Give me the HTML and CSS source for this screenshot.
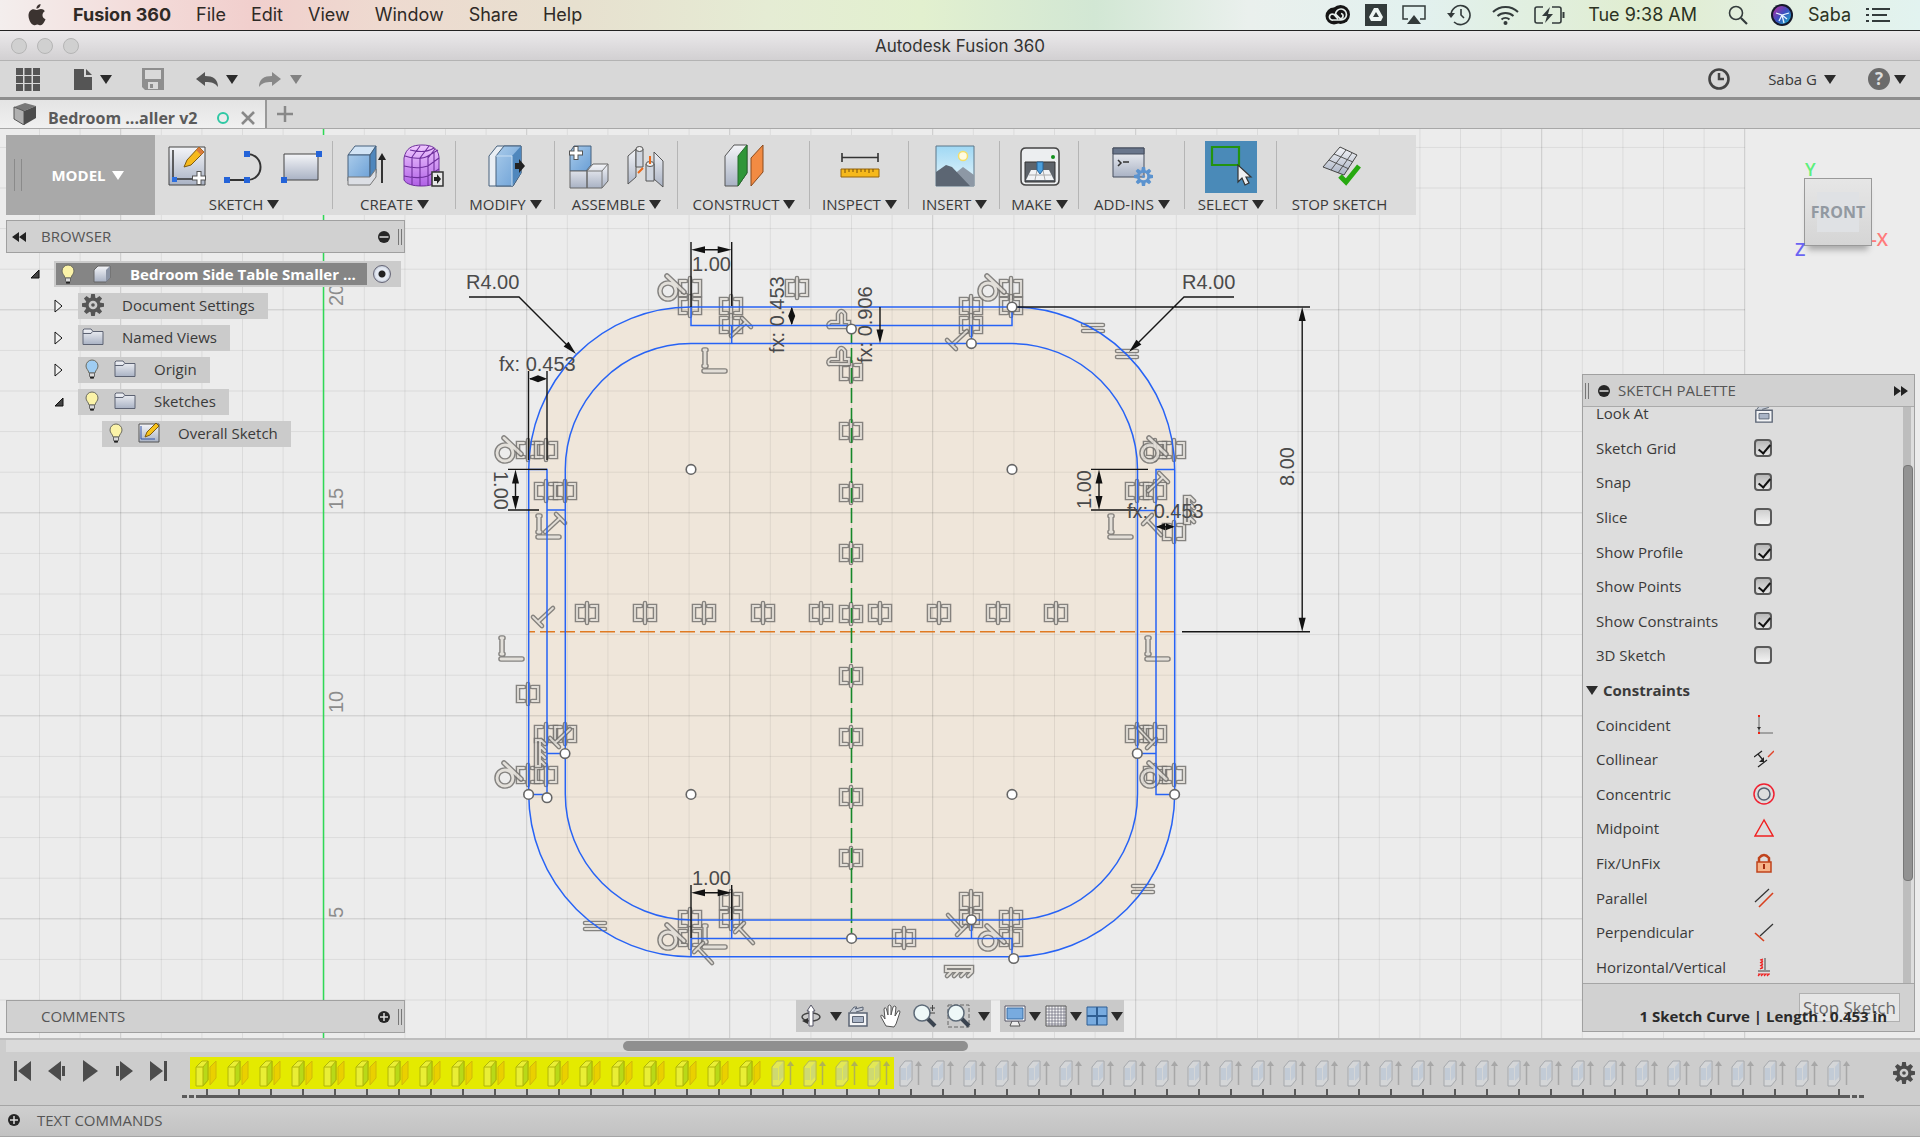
FILE: index.html
```html
<!DOCTYPE html>
<html lang="en">
<head>
<meta charset="utf-8">
<title>Autodesk Fusion 360</title>
<link rel="stylesheet" href="styles.css">
</head>
<body>
<svg class="defs" aria-hidden="true">
  <defs>
    <linearGradient id="gBlue" x1="0" y1="0" x2="1" y2="1"><stop offset="0" stop-color="#a9cbea"/><stop offset="1" stop-color="#6a9fd6"/></linearGradient>
    <linearGradient id="gGrey" x1="0" y1="0" x2="0" y2="1"><stop offset="0" stop-color="#f4f5f8"/><stop offset="1" stop-color="#a9b2c4"/></linearGradient>
    <linearGradient id="gSky" x1="0" y1="0" x2="0" y2="1"><stop offset="0" stop-color="#9fd8f4"/><stop offset="1" stop-color="#e8f6fb"/></linearGradient>
    <linearGradient id="gPurple" x1="0" y1="0" x2="0" y2="1"><stop offset="0" stop-color="#f0c8ff"/><stop offset="1" stop-color="#b061e6"/></linearGradient>
    <linearGradient id="gSiri" x1="0" y1="0" x2="1" y2="1"><stop offset="0" stop-color="#c02ba0"/><stop offset=".5" stop-color="#3b4fc0"/><stop offset="1" stop-color="#19b7c9"/></linearGradient>
    <symbol id="bulb" viewBox="0 0 14 20"><path d="M7 1a6 6 0 0 1 6 6c0 3-2.500 4-3 7H4C3.500 11 1 10 1 7a6 6 0 0 1 6-6z" stroke="#6b6b60"/><path d="M4.500 14h5v3.500L8 19H6l-1.500-1.500z" fill="#dadada" stroke="#666"/><path d="M5 18.500h4" stroke="#222" stroke-width="2"/></symbol>
    <symbol id="folder" viewBox="0 0 22 18"><path d="M1 16.500V2l1-1h7l2 2.500h10v13z" fill="url(#gGrey)" stroke="#5c6272"/><path d="M1 5.500h8l1.500-2" fill="none" stroke="#5c6272"/></symbol>
    <symbol id="gear" viewBox="0 0 24 24"><g fill="currentColor"><path id="tooth" d="M10 0h4l.7 5H9.300z"/><use href="#tooth" transform="rotate(45 12 12)"/><use href="#tooth" transform="rotate(90 12 12)"/><use href="#tooth" transform="rotate(135 12 12)"/><use href="#tooth" transform="rotate(180 12 12)"/><use href="#tooth" transform="rotate(225 12 12)"/><use href="#tooth" transform="rotate(270 12 12)"/><use href="#tooth" transform="rotate(315 12 12)"/></g><circle cx="12" cy="12" r="6.500" fill="none" stroke="currentColor" stroke-width="3.500"/><circle cx="12" cy="12" r="2" fill="currentColor"/></symbol>
    <symbol id="plane" viewBox="0 0 24 28"><path d="M2 8l6-6h6v19l-5 6H2z" fill="#fff" fill-opacity=".35" stroke="#8f9410"/><path d="M9 8l5-6v19l-5 6z" fill="#7fc21a" fill-opacity=".75" stroke="#8f9410"/><path d="M2 8h7" stroke="#8f9410"/><path d="M16 8l6-6v17l-6 7z" fill="#f0b400" fill-opacity=".8" stroke="#c49a10"/></symbol>
    <symbol id="extrude" viewBox="0 0 24 28"><path d="M2 8l5-6h7v19l-5 6H2z" fill="#e2e6ec" fill-opacity=".6" stroke="#8d9298"/><path d="M3 9h5v12H3zM9 8l4-5v15l-4 4z" fill="#a9bedb" fill-opacity=".6"/><path d="M20.500 26V5" stroke="#8e8e8e" stroke-width="1.500"/><path d="M17 7l3.500-5L24 7z" fill="#8e8e8e"/></symbol>
    <symbol id="minus" viewBox="0 0 12 12"><circle cx="6" cy="6" r="6" fill="#262626"/><path d="M1.500 6h9" stroke="#ddd" stroke-width="1.500"/></symbol>
    <symbol id="plus" viewBox="0 0 12 12"><circle cx="6" cy="6" r="6" fill="#262626"/><path d="M2 6h8M6 2v8" stroke="#ddd" stroke-width="1.500"/></symbol>
    <symbol id="camera" viewBox="0 0 22 22"><path d="M2 8h18v13H2z" fill="#f3f4f6" stroke="#5b6474" stroke-width="1.500"/><path d="M5.500 11.500h11v6h-11z" fill="#a9b4c6" stroke="#5b6474"/><path d="M3 7l4-5h3l-2 2 8-2v3l-7 2" fill="#c9cfd8" stroke="#5b6474"/></symbol>
    <symbol id="lens" viewBox="0 0 24 24"><path d="M14 14l8 8" stroke="#3b4450" stroke-width="4"/><circle cx="9" cy="9" r="8" fill="#eef8f8" stroke="#5d6a78" stroke-width="1.500"/></symbol>
  </defs>
</svg>

<header class="menubar">
  <nav class="menus">
    <svg class="apple" width="18" height="22" viewBox="0 0 18 22"><path d="M12.500 0c.2 2.500-1.800 4.800-4 4.700C8.300 2.400 10.300.2 12.500 0zM9 6c1 0 2-1 4-1 1.600 0 3 .9 3.800 2.200-3.400 2-2.900 6.600.7 8-1 2.700-2.900 6-5 6-1.200 0-1.700-.8-3.200-.8s-2 .8-3.200.8C3.400 21.200.5 16 .5 11.600.5 7.500 3 5.200 5.500 5.200 7 5.200 8.100 6 9 6z" fill="#3b3330"/></svg>
    <button class="app">Fusion 360</button><button>File</button><button>Edit</button><button>View</button><button>Window</button><button>Share</button><button>Help</button>
  </nav>
  <div class="status">
    <svg width="26" height="20" viewBox="0 0 26 20" fill="none"><circle cx="10" cy="11" r="8.500" fill="#151515"/><circle cx="16.500" cy="9.500" r="9.500" fill="#151515"/><path d="M14 14l-4-4.500a3 3 0 1 0-1 5.500h8a5.500 5.500 0 1 0-5.500-6l4.500 4.500a2.500 2.500 0 1 0 1-5" stroke="#e7efec" stroke-width="1.700"/></svg>
    <svg width="22" height="22" viewBox="0 0 22 22"><path d="M0 0h22v22H0z" fill="#333b3b"/><path d="M9 4h4l5 9-2 4H6l-2-4zM11 8l-3 5h6z" fill="#eef5f3" fill-rule="evenodd"/></svg>
    <svg width="24" height="20" viewBox="0 0 24 20" fill="none"><path d="M6 14H1V1h22v13h-5" stroke="#333b3b" stroke-width="1.500"/><path d="M12 10l7 9H5z" fill="#333b3b"/></svg>
    <svg class="wide" width="24" height="22" viewBox="0 0 24 22" fill="none" stroke="#333b3b" stroke-width="1.600"><path d="M4 11A9.500 9.500 0 1 1 7 18M14 5v6l3 3"/><path d="M0 9h8l-4 5z" fill="#333b3b" stroke="none"/></svg>
    <svg class="wide" width="27" height="20" viewBox="0 0 27 20" fill="none" stroke="#333b3b" stroke-width="2"><path d="M1 7a18 18 0 0 1 25 0M5.500 11a12 12 0 0 1 16 0M9.500 14.500a6 6 0 0 1 8 0"/><circle cx="13.500" cy="18" r="2" fill="#333b3b" stroke="none"/></svg>
    <svg width="31" height="18" viewBox="0 0 31 18" fill="none" stroke="#333b3b" stroke-width="1.600"><path d="M9 1H3a2 2 0 0 0-2 2v12a2 2 0 0 0 2 2h6M18 1h7a2 2 0 0 1 2 2v12a2 2 0 0 1-2 2h-7"/><path d="M16 1L8 10h5l-2 7 8-9h-5z" fill="#333b3b" stroke="none"/><path d="M29.500 6v6" stroke-width="2"/></svg>
    <time class="clock">Tue 9:38 AM</time>
    <svg width="20" height="20" viewBox="0 0 20 20" fill="none" stroke="#333b3b"><circle cx="8" cy="8" r="6.500" stroke-width="1.600"/><path d="M13 13l6 6" stroke-width="2.200"/></svg>
    <svg class="siri" width="22" height="22" viewBox="0 0 22 22"><circle cx="11" cy="11" r="11" fill="#15182b"/><circle cx="11" cy="11" r="9" fill="url(#gSiri)"/><path d="M5 9l6 2 7-2M11 11l-3 6M11 11l2 8M11 11l5 4" stroke="#e8f4ff" stroke-width="1.300" fill="none"/></svg>
    <span>Saba</span>
    <svg width="24" height="16" viewBox="0 0 24 16" stroke="#333b3b" stroke-width="2.200"><path d="M0 2h3M6 2h18M0 8h3M6 8h15M0 14h3M6 14h18"/></svg>
  </div>
</header>

<div class="titlebar"><span class="lights"><i></i><i></i><i></i></span><h1>Autodesk Fusion 360</h1></div>

<div class="appbar">
  <div class="quick">
    <button aria-label="Data panel"><svg width="24" height="23" viewBox="0 0 24 23" fill="#555"><path d="M0 0h7v7H0zM8.500 0h7v7h-7zM17 0h7v7h-7zM0 8h7v7H0zM8.500 8h7v7h-7zM17 8h7v7h-7zM0 16h7v7H0zM8.500 16h7v7h-7zM17 16h7v7h-7z"/></svg></button>
    <button class="file" aria-label="File"><svg width="18" height="21" viewBox="0 0 18 21" fill="#555"><path d="M0 0h10v8h8v13H0z"/><path d="M12 0l6 6h-6z"/></svg><b class="caret"></b></button>
    <button class="save" aria-label="Save"><svg width="22" height="22" viewBox="0 0 22 22"><path d="M0 0h22v22H3l-3-3z" fill="#8e8e8e"/><path d="M3 2h16v9H3zM6 14h10v7H6z" fill="#d9d9d9"/><path d="M8 16h3v4H8z" fill="#8e8e8e"/></svg></button>
    <button aria-label="Undo"><svg width="22" height="15" viewBox="0 0 22 15"><path d="M0 7l9-7v4c8 0 13 3 13 11-3-4-6-5-13-5v4z" fill="#555"/></svg><b class="caret"></b></button>
    <button class="off" aria-label="Redo"><svg width="22" height="15" viewBox="0 0 22 15"><path d="M22 7l-9-7v4C5 4 0 7 0 15c3-4 6-5 13-5v4z" fill="#888"/></svg><b class="caret"></b></button>
  </div>
  <div class="account">
    <button aria-label="Job status"><svg width="22" height="22" viewBox="0 0 22 22" fill="none" stroke="#444"><circle cx="11" cy="11" r="9.500" stroke-width="2.600"/><path d="M11 5v6h5" stroke-width="2.500"/></svg></button>
    <button class="user">Saba G<b class="caret"></b></button>
    <button class="help" aria-label="Help"><span>?</span><b class="caret"></b></button>
  </div>
</div>

<div class="tabs">
  <div class="tab">
    <svg width="24" height="22" viewBox="0 0 24 22"><path d="M1 4l11-4 11 3-12 5z" fill="#777"/><path d="M1 4l10 4v14L1 16z" fill="#b0b0b0" stroke="#555"/><path d="M11 8l12-5v12l-12 7z" fill="#4c4c4c"/></svg>
    <strong>Bedroom ...aller v2</strong><i class="ring"></i>
    <button aria-label="Close tab"><svg width="14" height="14" viewBox="0 0 14 14"><path d="M1 1l12 12M13 1L1 13" stroke="#888" stroke-width="2.600"/></svg></button>
  </div>
  <button class="add" aria-label="New tab"><svg width="16" height="16" viewBox="0 0 16 16"><path d="M8 0v16M0 8h16" stroke="#888" stroke-width="2.500"/></svg></button>
</div>

<main class="stage">
  <svg class="drawing" width="100%" height="100%">
    <g transform="translate(0,-129)">
      <path d="M691 307H1012A163 163 0 0 1 1175 470V794A163 163 0 0 1 1012 957H691A162 163 0 0 1 529 794V470A162 163 0 0 1 691 307z" fill="#efe6da"/>
      <g id="grid"></g>
      <path d="M323.500 129V1040" stroke="#2fd955" stroke-width="1.500"/>
      <g class="axis"><text transform="translate(343,306) rotate(-90)">20</text><text transform="translate(343,510) rotate(-90)">15</text><text transform="translate(343,713) rotate(-90)">10</text><text transform="translate(343,918) rotate(-90)">5</text></g>
      <g id="marks"></g>
      <path d="M528 631.700H1175" stroke="#df7a22" stroke-width="1.600" stroke-dasharray="15 5" stroke-dashoffset="8"/>
      <path d="M851.500 328V938" stroke="#17882a" stroke-width="1.600" stroke-dasharray="15 5"/>
      <g class="curve">
        <path d="M691 307H1012A163 163 0 0 1 1174.700 470V794A163 163 0 0 1 1012 956.700H691A162 163 0 0 1 528.700 794V470A162 163 0 0 1 691 307z"/>
        <path d="M691 343.600H1012A126 126 0 0 1 1137.500 470V794A126 126 0 0 1 1012 920H691A126 126 0 0 1 565.300 794V470A126 126 0 0 1 691 343.600z"/>
        <path d="M691 307V325.400H1012V307M731.700 325V344M971.500 325V344M528.700 469.400H547V798M547 510H565M547 753.600H565M529 794.400H547M1175 469.400H1156V794.400H1175M1137 510.400H1156M1137 753.500H1156M691 957V938.400H1012V957M731.700 920V938M971.500 920V938"/>
      </g>
      <g class="dim">
        <path d="M469 297H519L570 348M1234 297H1184L1134 347M691 242V307M731.700 242V306M700 249.700H722M691 885V938M731.700 885V920M700 892.700H722M528.500 371V460M547 371V460M530 378.700H545M508 469.400H547M508 510H539M515.500 478V502M1091 469.400H1148M1091 510H1137M1099 478V502M1157 526.700H1173M791.700 308V324M880 307V335M1013 307H1310M1182 631.700H1310M1302.200 315V624"/>
      </g>
      <g id="arrows"></g>
      <g class="dimtext">
        <text x="466" y="289">R4.00</text><text x="1182" y="289">R4.00</text><text x="692" y="271">1.00</text><text x="692" y="885">1.00</text>
        <text x="499" y="371">fx: 0.453</text><text x="1127" y="518">fx: 0.453</text>
        <text transform="translate(494,471) rotate(90)">1.00</text><text transform="translate(1091,509) rotate(-90)">1.00</text><text transform="translate(1294,486) rotate(-90)">8.00</text>
        <text transform="translate(784,353) rotate(-90)">fx: 0.453</text><text transform="translate(872,363) rotate(-90)">fx: 0.906</text>
      </g>
      <g id="points"></g>
    </g>
  </svg>

  <section class="ribbon">
    <button class="workspace">MODEL <b class="caret"></b></button>
    <div class="group"><div class="tools">
      <svg width="44" height="46" viewBox="0 0 44 46"><path d="M4 3h36v38H4z" fill="url(#gGrey)" stroke="#444"/><path d="M8 6v29h26" fill="none" stroke="#333" stroke-width="1.500"/><path d="M7 33h5v5H7z" fill="#2d6fe0"/><path d="M19 23l3-7L34 3l5 5-13 13z" fill="#f6b91c" stroke="#7d5a10"/><path d="M34 3l5 5-3 3-5-5z" fill="#d97a3b"/><path d="M34 27v14M27 34h14" stroke="#555" stroke-width="5"/><path d="M34 28v12M28 34h12" stroke="#fff" stroke-width="3"/></svg>
      <svg width="44" height="46" viewBox="0 0 44 46"><path d="M5 36h20c18 0 18-26 0-26" fill="none" stroke="#333" stroke-width="2"/><path d="M2 33h6v6H2zM22 33h6v6h-6zM22 7h6v6h-6z" fill="#2463d8"/></svg>
      <svg width="44" height="46" viewBox="0 0 44 46"><path d="M5 10h34v26H5z" fill="url(#gGrey)" stroke="#444"/><path d="M37 7h6v6h-6zM2 33h6v6H2z" fill="#2463d8"/></svg>
    </div><button class="label">SKETCH<b class="caret"></b></button></div>
    <div class="group"><div class="tools">
      <svg width="44" height="46" viewBox="0 0 44 46"><path d="M5 11l7-9h21l-6 9z" fill="#d2e4f5" stroke="#47617c"/><path d="M5 11h22v26H5z" fill="url(#gBlue)" stroke="#47617c"/><path d="M27 11l6-9v27l-6 9z" fill="#4f87bd" stroke="#47617c"/><path d="M5 33h22l6-8v8l-6 8H5z" fill="#dcdfe5" stroke="#777"/><path d="M39 39V14" stroke="#222" stroke-width="1.800"/><path d="M35 16l4-7 4 7z" fill="#222"/></svg>
      <svg width="46" height="46" viewBox="0 0 46 46"><path d="M4 14C6 4 12 1 22 1s16 3 17 12v22c-4 6-10 7-18 7S6 40 4 36z" fill="url(#gPurple)" stroke="#6e2f9c"/><path d="M5 12c8 3 18 3 23 0l10-6M4 22c8 2 18 2 24 0l11-8M4 32c9 2 18 2 24 0l11-7M12 13v28M20 14v28M28 12v29M10 6c8 2 18 2 24-2M20 2l-8 11M29 2l-9 12M35 5l-7 9M34 9v29" fill="none" stroke="#6e2f9c" stroke-width="1.100"/><path d="M32 28h11v14H32z" fill="#e8e8e8" stroke="#333" stroke-width="1.500"/><path d="M34 33h3v-3l4 5-4 5v-3h-3z" fill="#222"/></svg>
    </div><button class="label">CREATE<b class="caret"></b></button></div>
    <div class="group"><div class="tools">
      <svg width="44" height="46" viewBox="0 0 44 46"><path d="M5 12L13 2h24v27l-8 13H5z" fill="#e9eef4" stroke="#47617c"/><path d="M12 12L20 2h17v27l-8 13H12z" fill="url(#gBlue)" stroke="#47617c"/><path d="M28 12l9-10v27l-9 13z" fill="#4f87bd"/><path d="M12 12h16v30" fill="none" stroke="#c8def2"/><path d="M31 19h4v-4l6 7-6 7v-4h-4z" fill="#222"/></svg>
    </div><button class="label">MODIFY<b class="caret"></b></button></div>
    <div class="group"><div class="tools">
      <svg width="44" height="46" viewBox="0 0 44 46"><path d="M4 8l4-6h17v19l-5 6H4z" fill="url(#gBlue)" stroke="#47617c"/><path d="M4 27h17v17H4zM21 27l6-7h15v17l-6 7H21z" fill="url(#gGrey)" stroke="#666"/><path d="M21 27h15l6-7M36 27v17" fill="none" stroke="#777"/><path d="M10 2v14M3 9h14" stroke="#555" stroke-width="5"/><path d="M10 3v12M4 9h12" stroke="#fff" stroke-width="3"/></svg>
      <svg width="44" height="46" viewBox="0 0 44 46"><path d="M5 12l8-7v28l-8 7zM31 8l9 9v26l-9-8z" fill="url(#gGrey)" stroke="#555"/><path d="M13 5h7v18h-7zM23 20h8v17h-8z" fill="#cfd5df" stroke="#555"/><ellipse cx="16.500" cy="5" rx="3.500" ry="2.500" fill="#eee" stroke="#555"/><ellipse cx="27" cy="20" rx="4" ry="2.500" fill="#eee" stroke="#555"/><path d="M15 29l5-5M27 20v-8" stroke="#ea6a1c" stroke-width="2"/></svg>
    </div><button class="label">ASSEMBLE<b class="caret"></b></button></div>
    <div class="group"><div class="tools">
      <svg width="44" height="46" viewBox="0 0 44 46"><path d="M3 12L12 1h13v28L16 42H3z" fill="url(#gGrey)" stroke="#555"/><path d="M16 12l9-11v28l-9 13z" fill="#2f9638" stroke="#256b2b"/><path d="M29 14L41 1v27L29 42z" fill="#f28b43" stroke="#8b4a1c"/></svg>
    </div><button class="label">CONSTRUCT<b class="caret"></b></button></div>
    <div class="group"><div class="tools">
      <svg width="44" height="46" viewBox="0 0 44 46"><path d="M4 9v9M40 9v9M4 13.500h36" stroke="#333" stroke-width="1.600"/><path d="M3 25h38v8H3z" fill="#f6b91c" stroke="#94640f"/><path d="M7 25v4M11 25v3M15 25v3M19 25v4M23 25v3M27 25v3M31 25v4M35 25v3" stroke="#79510b"/></svg>
    </div><button class="label">INSPECT<b class="caret"></b></button></div>
    <div class="group"><div class="tools">
      <svg width="44" height="46" viewBox="0 0 44 46"><path d="M3 2h38v40H3z" fill="url(#gSky)" stroke="#5d7688"/><circle cx="30" cy="12" r="4.500" fill="#fffbe0" stroke="#f4df6a" stroke-width="1.500"/><path d="M20 31l10-8 11 8v11H20z" fill="#8d98a5"/><path d="M3 28l10-7 6 2 18 19H3z" fill="#5c6673"/></svg>
    </div><button class="label">INSERT<b class="caret"></b></button></div>
    <div class="group"><div class="tools">
      <svg width="44" height="46" viewBox="0 0 44 46"><path d="M3 9q0-5 5-5h28q5 0 5 5v27q0 5-5 5H8q-5 0-5-5z" fill="#eceef0" stroke="#444" stroke-width="1.500"/><circle cx="35" cy="13" r="2" fill="#12901c"/><path d="M7 18h30v20H7z" fill="#5d636a" stroke="#333"/><path d="M13 26h18l5 10H8z" fill="#f1f3f5"/><path d="M11 31h22M19 26l-2 10M25 26l2 10" stroke="#aaa"/><path d="M19 18h6v8l-3 4-3-4z" fill="#4da0dd" stroke="#27659a"/></svg>
    </div><button class="label">MAKE<b class="caret"></b></button></div>
    <div class="group"><div class="tools">
      <svg width="44" height="46" viewBox="0 0 44 46"><path d="M3 4h31v29H3z" fill="url(#gGrey)" stroke="#444d5c"/><path d="M3 4h31v6H3z" fill="#69768c" stroke="#444d5c"/><path d="M8 16l3 3-3 3M13 18h6" fill="none" stroke="#333" stroke-width="1.500"/><svg x="24" y="23" width="19" height="19" color="#5b93cf"><use href="#gear"/></svg></svg>
    </div><button class="label">ADD-INS<b class="caret"></b></button></div>
    <div class="group"><div class="tools">
      <svg class="selected" width="52" height="52" viewBox="0 0 52 52"><path d="M7 6h27v18H7z" fill="none" stroke="#23930f" stroke-width="2.200"/><path d="M33 24v17l4-4 3 7 4-2-3-6h5z" fill="#eef0f3" stroke="#333" stroke-width="1.200"/></svg>
    </div><button class="label">SELECT<b class="caret"></b></button></div>
    <div class="group"><div class="tools">
      <svg width="44" height="46" viewBox="0 0 44 46"><path d="M22 3l17 8-13 20-21-8z" fill="url(#gGrey)" stroke="#444"/><path d="M16 10l19 8M11 16l20 9M28 6L13 26M34 9L20 29" stroke="#555"/><path d="M22 32l6 6 13-16" fill="none" stroke="#27a910" stroke-width="5"/></svg>
    </div><button class="label">STOP SKETCH</button></div>
  </section>

  <aside class="left">
    <div class="panelhead"><svg width="14" height="10" viewBox="0 0 14 10"><path d="M7 0v10L0 5zM14 0v10L7 5z" fill="#222"/></svg><h2>BROWSER</h2><svg class="end" width="12" height="12"><use href="#minus"/></svg><i class="grip"></i></div>
    <ul class="tree">
      <li class="root"><svg class="tw" width="10" height="10" viewBox="0 0 10 10"><path d="M1 9L9 1v8z" fill="#444" stroke="#111"/></svg><span class="chip"><span class="name"><svg class="bulb on" width="14" height="20"><use href="#bulb"/></svg><svg width="18" height="18" viewBox="0 0 18 18"><path d="M1 5l4-4h12v12l-4 4H1z" fill="url(#gGrey)" stroke="#666"/><path d="M13 5l4-4v12l-4 4z" fill="#8b94a5"/></svg><strong>Bedroom Side Table Smaller ...</strong></span><input type="radio" checked aria-label="Activate component"></span></li>
      <li><svg class="tw" width="9" height="14" viewBox="0 0 9 14"><path d="M1 1l7 6-7 6z" fill="#f2f2f2" stroke="#111"/></svg><span class="chip"><svg class="ic gear" width="22" height="22"><use href="#gear"/></svg>Document Settings</span></li>
      <li><svg class="tw" width="9" height="14" viewBox="0 0 9 14"><path d="M1 1l7 6-7 6z" fill="#f2f2f2" stroke="#111"/></svg><span class="chip"><svg class="ic" width="22" height="18"><use href="#folder"/></svg>Named Views</span></li>
      <li><svg class="tw" width="9" height="14" viewBox="0 0 9 14"><path d="M1 1l7 6-7 6z" fill="#f2f2f2" stroke="#111"/></svg><span class="chip"><svg class="bulb hid" width="14" height="20"><use href="#bulb"/></svg><svg class="ic" width="22" height="18"><use href="#folder"/></svg>Origin</span></li>
      <li><svg class="tw" width="10" height="10" viewBox="0 0 10 10"><path d="M1 9L9 1v8z" fill="#444" stroke="#111"/></svg><span class="chip"><svg class="bulb on" width="14" height="20"><use href="#bulb"/></svg><svg class="ic" width="22" height="18"><use href="#folder"/></svg>Sketches</span></li>
      <li class="leaf"><span class="chip"><svg class="bulb on" width="14" height="20"><use href="#bulb"/></svg><svg class="ic" width="22" height="20" viewBox="0 0 22 20"><path d="M1 1h20v18H1z" fill="url(#gGrey)" stroke="#555"/><path d="M3 3v13h14" fill="none" stroke="#35a"/><path d="M7 14l2-5L18 0l3 3-9 9z" fill="#f6c21c" stroke="#7d5a10"/></svg>Overall Sketch</span></li>
    </ul>
    <div class="panelhead comments"><h2>COMMENTS</h2><svg class="end" width="12" height="12"><use href="#plus"/></svg><i class="grip"></i></div>
  </aside>

  <div class="cube"><span class="y">Y</span><span class="z">Z</span><span class="x">-X</span><button>FRONT</button></div>

  <section class="palette">
    <header><i class="grip"></i><svg width="12" height="12"><use href="#minus"/></svg><h2>SKETCH PALETTE</h2><svg class="end" width="14" height="10" viewBox="0 0 14 10"><path d="M0 0v10l7-5zM7 0v10l7-5z" fill="#222"/></svg></header>
    <div class="body">
      <ul>
        <li><span>Look At</span><svg width="20" height="20"><use href="#camera"/></svg></li>
        <li><label for="c1">Sketch Grid</label><input id="c1" type="checkbox" checked></li>
        <li><label for="c2">Snap</label><input id="c2" type="checkbox" checked></li>
        <li><label for="c3">Slice</label><input id="c3" type="checkbox"></li>
        <li><label for="c4">Show Profile</label><input id="c4" type="checkbox" checked></li>
        <li><label for="c5">Show Points</label><input id="c5" type="checkbox" checked></li>
        <li><label for="c6">Show Constraints</label><input id="c6" type="checkbox" checked></li>
        <li><label for="c7">3D Sketch</label><input id="c7" type="checkbox"></li>
        <li class="section"><b class="caret"></b><strong>Constraints</strong></li>
        <li><span>Coincident</span><svg width="20" height="20" viewBox="0 0 20 20"><path d="M5 2v16h14" fill="none" stroke="#666"/><path d="M4 0h2v2H4zM4 17h2v2H4z" fill="#e21"/><path d="M3 12h4l-2 3z" fill="#333"/></svg></li>
        <li><span>Collinear</span><svg width="20" height="20" viewBox="0 0 20 20"><path d="M0 8l8-6M4 18l9-7M4 5l5 6" stroke="#222" stroke-width="1.200"/><path d="M10 8v5H5z" fill="#222"/><path d="M14 8l6-6" stroke="#e2442a" stroke-width="1.500"/></svg></li>
        <li><span>Concentric</span><svg width="22" height="22" viewBox="0 0 22 22" fill="none"><circle cx="11" cy="11" r="10" stroke="#f02030" stroke-width="1.500"/><circle cx="11" cy="11" r="6" stroke="#556070" stroke-width="1.500"/></svg></li>
        <li><span>Midpoint</span><svg width="20" height="20" viewBox="0 0 20 20"><path d="M10 2L1 18h18z" fill="none" stroke="#f02020" stroke-width="1.400"/></svg></li>
        <li><span>Fix/UnFix</span><svg width="20" height="20" viewBox="0 0 20 20"><path d="M5 9V5q5-6 10 0v4" fill="none" stroke="#c0431c" stroke-width="2.500"/><path d="M3 9h14v10H3z" fill="#f6b48a" stroke="#c0431c" stroke-width="1.500"/><path d="M10 11v5" stroke="#a52c10" stroke-width="2"/></svg></li>
        <li><span>Parallel</span><svg width="20" height="20" viewBox="0 0 20 20"><path d="M1 14L15 1" stroke="#333" stroke-width="1.200"/><path d="M5 19L19 5" stroke="#d8401f" stroke-width="1.600"/></svg></li>
        <li><span>Perpendicular</span><svg width="20" height="20" viewBox="0 0 20 20"><path d="M6 14L19 2" stroke="#333" stroke-width="1.200"/><path d="M1 11l9 8" stroke="#d8401f" stroke-width="1.600"/></svg></li>
        <li><span>Horizontal/Vertical</span><svg width="20" height="20" viewBox="0 0 20 20"><path d="M11 1v12M4 14h12" stroke="#777" stroke-width="1.500"/><path d="M6 3l3-1M6 6l3-2M6 9l3-2M6 12l3-2M8 2v10M4 19l2-2M7 19l2-2M10 19l2-2M13 19l2-2M4 17h12" stroke="#e22" stroke-width="1.200"/></svg></li>
      </ul>
      <i class="scroll"></i>
    </div>
    <footer><button>Stop Sketch</button></footer>
    <output>1 Sketch Curve | Length : 0.453 in</output>
  </section>

  <div class="navbars">
    <div class="navbar">
      <button aria-label="Orbit"><svg width="22" height="22" viewBox="0 0 22 22"><ellipse cx="11" cy="12" rx="9" ry="4" fill="none" stroke="#444" stroke-width="1.500"/><path d="M9 21V6H7l4-6 4 6h-2v15z" fill="#fff" stroke="#556"/><path d="M8 13v6l-6-3z" fill="#333"/></svg><b class="caret"></b></button>
      <button aria-label="Look at"><svg width="22" height="22"><use href="#camera"/></svg></button>
      <button aria-label="Pan"><svg width="24" height="24" viewBox="0 0 24 24"><path d="M7 22L2 13q-1-3 2-1l2 3L5 5q1-3 2.500 0L9 11l0-9q1.500-2 3 0v9l2-8q2-2 3 0l-1 9 3-5q2-1 2 1l-4 12-2 3z" fill="#fff" stroke="#555"/></svg></button>
      <button aria-label="Zoom"><svg width="24" height="24" viewBox="0 0 24 24"><use href="#lens"/><path d="M17 4h5M19.500 1v6M17 9h5" stroke="#444"/></svg></button>
      <button aria-label="Fit"><svg width="24" height="24" viewBox="0 0 24 24"><path d="M1 1h21v22H1z" fill="none" stroke="#666" stroke-dasharray="4 2"/><use href="#lens"/></svg><b class="caret"></b></button>
    </div>
    <div class="navbar view">
      <button aria-label="Display settings"><svg width="22" height="22" viewBox="0 0 22 22"><path d="M8 16h6l2 5H6z" fill="#eee" stroke="#555"/><path d="M1 1h20v15H1z" fill="#fff" stroke="#556"/><path d="M3 3h16v11H3z" fill="#78abdf" stroke="#3569a0"/></svg><b class="caret"></b></button>
      <button aria-label="Grid and snaps"><svg width="22" height="22" viewBox="0 0 22 22"><path d="M1 1h20v20H1z" fill="#f4f4f4" stroke="#555"/><path d="M4 1v20M7 1v20M10 1v20M13 1v20M16 1v20M19 1v20M1 4h20M1 7h20M1 10h20M1 13h20M1 16h20M1 19h20" stroke="#667" stroke-width=".7"/></svg><b class="caret"></b></button>
      <button aria-label="Viewports"><svg width="22" height="20" viewBox="0 0 22 20"><path d="M1 1h20v18H1z" fill="#78abdf" stroke="#2f5f94"/><path d="M11 1v18M1 10h20" stroke="#2f5f94" stroke-width="2"/></svg><b class="caret"></b></button>
    </div>
  </div>
</main>

<section class="timeline">
  <div class="track"><i></i></div>
  <div class="strip">
    <div class="play">
      <button aria-label="First"><svg width="17" height="20" viewBox="0 0 17 20"><path d="M0 0h3v20H0zM17 0v20L4 10z"/></svg></button>
      <button aria-label="Previous"><svg width="17" height="20" viewBox="0 0 17 20"><path d="M13 0v20L0 10zM14 5h3v10h-3z"/></svg></button>
      <button aria-label="Play"><svg width="17" height="22" viewBox="0 0 17 22"><path d="M1 0l15 11L1 22z"/></svg></button>
      <button aria-label="Next"><svg width="17" height="20" viewBox="0 0 17 20"><path d="M4 0v20l13-10zM0 5h3v10H0z"/></svg></button>
      <button aria-label="Last"><svg width="17" height="20" viewBox="0 0 17 20"><path d="M14 0h3v20h-3zM0 0v20l13-10z"/></svg></button>
    </div>
    <div class="history"><ol id="features"></ol><i class="rail"></i></div>
    <button class="prefs" aria-label="Timeline settings"><svg width="22" height="22"><use href="#gear"/></svg></button>
  </div>
</section>

<footer class="commands"><svg width="12" height="12"><use href="#plus"/></svg><span>TEXT COMMANDS</span></footer>
<script src="script.js"></script>
</body>
</html>
```
FILE: styles.css
```css
* { box-sizing: border-box; }
html, body { margin: 0; }
body { min-height: 100vh; display: flex; flex-direction: column; overflow: hidden; background: #ececec; color: #3a3a3a; font: 15px/20px "Open Sans", "Noto Sans", sans-serif; }
button { border: 0; padding: 0; background: none; color: inherit; font: inherit; display: flex; align-items: center; }
svg { display: block; flex: none; }
h1, h2, ul, ol { margin: 0; padding: 0; list-style: none; font-weight: 400; }
h2 { font-size: 15px; color: #555; padding-bottom: 2px; }
.defs { position: absolute; width: 0; height: 0; }
.caret { display: inline-block; border: 6px solid transparent; border-top: 9px solid #2b2b2b; border-bottom: 0; margin-left: 4px; flex: none; }
.grip { width: 4px; height: 16px; border: solid #777; border-width: 0 1px; }

.menubar { height: 31px; border-bottom: 1px solid #222; display: flex; justify-content: space-between; align-items: center; padding: 0 30px 0 28px; font: 18px/28px Inter, sans-serif; color: #2f2a26; background: linear-gradient(90deg, #f3eeed 0, #f3dad8 8%, #f1cfcd 13%, #eedad0 20%, #e7e0cf 30%, #e5ecd4 40%, #e2f0cf 48%, #d2e7d4 57%, #eaf0ed 65%, #e2f1ef 74%, #e0edcf 86%, #e3efe0 92%, #e2f3f0 100%); }
.menus, .status { display: flex; align-items: center; }
.menus button { margin-left: 25px; }
.menus .app { font-weight: 700; margin-left: 27px; }
.status { gap: 15px; color: #2c3322; }
.status .wide { margin-left: 6px; }
.status .clock { margin: 0 16px 0 8px; }
.status .siri { margin-left: 8px; }

.titlebar { height: 30px; display: grid; grid-template-columns: 1fr auto 1fr; align-items: center; background: linear-gradient(#ebe9eb, #d2d0d2); border-bottom: 1px solid #b3b3b3; }
.titlebar h1 { font: 17px/28px Inter, sans-serif; color: #333; }
.lights { display: flex; gap: 10px; padding-left: 11px; }
.lights i { width: 16px; height: 16px; border: 1px solid #b5b5b5; border-radius: 50%; background: #d0d0d0; }

.appbar { height: 39px; display: flex; justify-content: space-between; align-items: center; background: #d8d8d8; border-bottom: 3px solid #8e8e8e; padding: 0 14px 0 16px; }
.quick, .account { display: flex; align-items: center; }
.quick .file { margin-left: 34px; }
.quick .save { margin: 0 32px 0 30px; }
.quick .caret { margin-left: 8px; }
.quick .off { margin-left: 21px; }
.off .caret { opacity: .5; margin-left: 9px; }
.user { margin: 0 32px 0 38px; }
.user .caret { margin-left: 7px; }
.help span { width: 22px; height: 22px; border-radius: 50%; background: #6b6b6b; color: #ddd; font-weight: 700; font-size: 17px; line-height: 22px; text-align: center; }

.tabs { height: 29px; display: flex; background: #d8d8d8; border-bottom: 1px solid #a8a8a8; }
.tab { width: 267px; display: flex; align-items: center; padding: 0 10px 0 13px; background: linear-gradient(#e4e4e4, #f0f0f0); border-right: 2px solid #999; }
.tab strong { margin: 7px 0 0 11px; font-weight: 700; font-size: 16px; color: #5a5a5a; flex: 1; white-space: nowrap; }
.ring { width: 12px; height: 12px; border: 2px solid #2fc8a4; border-radius: 50%; margin: 7px 12px 0 0; }
.tab button { margin-top: 7px; }
.add { margin-left: 10px; }

.stage { position: relative; flex: 1; display: flex; flex-direction: column; overflow: hidden; }
.drawing { position: absolute; inset: 0; }
.curve { fill: none; stroke: #2763f5; stroke-width: 1.500; }
.dim { fill: none; stroke: #161616; stroke-width: 1.400; }
.dimtext, .axis { font: 20px "Liberation Sans", sans-serif; fill: #4a4a4a; }
.axis { fill: #8c8c8c; }

.ribbon { position: relative; margin: 6px 6px 0; width: 1410px; max-width: 100%; height: 80px; display: grid; grid-template-columns: 149px 178px 123px 99px 123px 132px 99px 91px 79px 106px 92px 139px; background: #dcdcdc; }
.workspace { position: relative; background: #a9a9a9; color: #fff; font-weight: 700; justify-content: center; padding: 0 0 0 14px; }
.workspace .caret { border-top-color: #fff; margin-left: 6px; }
.workspace::before { content: ""; position: absolute; left: 8px; top: 24px; width: 6px; height: 32px; border: solid #8a8a8a; border-width: 0 1px; }
.group { display: flex; flex-direction: column; align-items: center; padding-top: 6px; background: linear-gradient(#b5b5b5, #b5b5b5) right 6px / 1px 68px no-repeat; }
.group:last-child { background: none; padding-right: 14px; }
.tools { height: 52px; display: flex; align-items: center; gap: 13px; }
.selected { background: #4a8ab8; }
.label { height: 22px; white-space: nowrap; }

.left { position: relative; flex: 1; width: 399px; margin: 5px 6px 5px; display: flex; flex-direction: column; }
.panelhead { height: 33px; display: flex; align-items: center; padding: 0 2px 0 5px; background: #d1d1d1; border: 1px solid #a0a0a0; }
.panelhead h2 { margin-left: 15px; }
.panelhead .end { margin: 0 8px 0 auto; }
.comments { margin-top: auto; }
.comments h2 { margin-left: 29px; }
.tree { padding-top: 8px; display: grid; gap: 6px; }
.tree li { height: 26px; display: flex; align-items: center; padding-left: 48px; }
.tree .root { padding-left: 24px; }
.tree .leaf { padding-left: 96px; }
.tw { margin-right: 15px; }
.tree .root .tw, .tree li .tw[width="10"] { margin-right: 14px; }
.chip { height: 26px; display: flex; align-items: center; padding: 0 13px 0 4px; background: #cbcbcb; line-height: 24px; padding-bottom: 2px; white-space: nowrap; }
.chip .ic { margin-right: 18px; }
.bulb { margin: 0 15px 0 3px; fill: #fbf3a8; }
.bulb.hid { fill: #9fcdf2; }
.gear { color: #555; }
.root .chip { padding: 0 10px 0 2px; }
.name { height: 22px; width: 311px; display: flex; align-items: center; background: #858585; color: #fff; padding: 0 0 1px 2px; }
.name strong { margin-left: 19px; font-weight: 700; }
.root .bulb { margin-right: 18px; }
.root input { appearance: none; width: 18px; height: 18px; margin: 0 0 0 6px; border: 1px solid #667; border-radius: 50%; background: radial-gradient(circle, #222 0 3px, #e4e9f2 4px 6px, #b3bccb 9px); }

.cube { position: absolute; top: 31px; right: 29px; width: 90px; height: 100px; font-size: 18px; font-weight: 600; }
.cube button { position: absolute; left: 3px; top: 18px; width: 68px; height: 68px; justify-content: center; border: 1px solid #999; background: linear-gradient(#dfe1e4, #dfe1e4) center / 42px 40px no-repeat, linear-gradient(#e6e6e6, #d5d5d5); box-shadow: 0 8px 6px -4px #aaa; font-weight: 700; font-size: 16px; color: #9299a1; }
.cube span { position: absolute; line-height: 18px; }
.cube .y { left: 4px; top: 0; color: #5cf07c; }
.cube .z { left: -6px; top: 80px; color: #6a64f2; z-index: 1; }
.cube .x { right: 3px; top: 70px; color: #ff7a7a; }

.palette { position: absolute; right: 5px; top: 245px; bottom: 6px; width: 333px; display: flex; flex-direction: column; background: #ddd; border: 1px solid #a0a0a0; }
.palette header { height: 32px; flex: none; display: flex; align-items: center; padding: 0 6px 0 2px; background: #d1d1d1; border-bottom: 1px solid #aaa; }
.palette header svg { margin-left: 9px; }
.palette header h2 { margin-left: 8px; }
.palette header .end { margin-left: auto; }
.body { position: relative; flex: 1; min-height: 0; overflow: hidden; }
.body ul { height: calc(100% + 12px); margin-top: -11px; display: flex; flex-direction: column; }
.body li { flex: 1; min-height: 0; display: grid; grid-template-columns: 156px 24px; align-items: center; justify-items: start; padding-left: 13px; }
.body li > svg, .body input { justify-self: center; }
.body .section { grid-template-columns: auto 1fr; padding-left: 3px; }
.section strong { margin-left: 5px; font-weight: 700; }
.section .caret { margin: 0; }
.body input { appearance: none; position: relative; width: 18px; height: 18px; margin: 0 2px 0 0; border: 2px solid #5a5a5a; border-radius: 4px; background: linear-gradient(#cfcfcf, #f4f4f4); }
.body input:checked { background: linear-gradient(#b8b8b8, #e6e6e6); }
.body input:checked::after { content: ""; position: absolute; left: 5px; top: 1px; width: 5px; height: 10px; border: solid #111; border-width: 0 2px 2px 0; transform: rotate(40deg); }
.scroll { position: absolute; right: 3px; top: 0; bottom: 0; width: 8px; background: #bdbdbd; }
.scroll::after { content: ""; position: absolute; left: 0; top: 10%; width: 8px; height: 72%; border: 1px solid #777; border-radius: 4px; background: #929292; }
.palette footer { height: 48px; flex: none; display: flex; align-items: center; justify-content: flex-end; padding: 0 14px 0 0; background: #d1d1d1; border-top: 1px solid #a5a5a5; }
.palette footer button { width: 101px; height: 29px; justify-content: center; border: 1px solid #b0b0b0; background: #e6e6e6; font-size: 17px; color: #6a6a6a; }
.palette output { position: absolute; right: 27px; bottom: 5px; font-weight: 700; color: #2a2a2a; white-space: nowrap; }

.navbars { position: absolute; left: 0; right: 0; bottom: 6px; display: flex; justify-content: center; gap: 9px; pointer-events: none; }
.navbar { height: 32px; display: flex; align-items: center; padding: 0 1px 0 4px; gap: 10px; background: #c9c9c9; }
.navbar button:first-child .caret { margin-left: 8px; }
.navbar button + button .caret { margin-left: 7px; }
.navbar button:first-child + button { margin-left: -5px; }
.view { gap: 4px; }
.view button:first-child .caret, .view button + button .caret { margin-left: 3px; }
.view button:first-child + button { margin-left: 0; }

.timeline { background: #cdcdcd; border-top: 2px solid #bdbdbd; height: 67px; }
.track { height: 12px; margin-left: 6px; background: #dadada; }
.track i { display: block; width: 18%; height: 10px; margin-left: calc(32% + 5px); border-radius: 5px; background: #8f8f8f; position: relative; top: 1px; }
.strip { display: flex; height: 53px; padding: 5px 5px 0 14px; }
.play { display: flex; width: 168px; height: 28px; gap: 17px; align-items: center; fill: #4c4c4c; }
.history { flex: 1; overflow: hidden; }
.history ol { display: flex; height: 38px; margin-left: 8px; background: repeating-linear-gradient(90deg, transparent 0 16px, #5a5a5a 16px 18px, transparent 18px 32px) 0 32px / 1664px 6px no-repeat; }
.history li { width: 32px; height: 32px; flex: none; display: flex; align-items: center; padding-left: 4px; }
.history li.hl { background: #e4ea00; }
.history .pl { opacity: .6; }
.history .ex { opacity: .6; }
.rail { display: block; height: 3px; margin-right: 29px; background: repeating-linear-gradient(90deg, #5a5a5a 0 5px, transparent 5px 7px) left / 14px 3px no-repeat, repeating-linear-gradient(90deg, transparent 0 2px, #5a5a5a 2px 7px) right / 14px 3px no-repeat, linear-gradient(#5a5a5a, #5a5a5a) content-box no-repeat; padding: 0 14px; }
.prefs { height: 32px; color: #4c4c4c; }

.commands { height: 32px; display: flex; align-items: center; gap: 17px; padding: 0 0 2px 8px; border: solid #a5a5a5; border-width: 1px 0; background: linear-gradient(#cfcfcf, #c2c2c2); color: #555; }
```
FILE: script.js
```js
const NS = 'http://www.w3.org/2000/svg';
function add(parent, tag, attrs) {
  const el = document.createElementNS(NS, tag);
  for (const k in attrs) el.setAttribute(k, attrs[k]);
  parent.appendChild(el);
  return el;
}

// Sketch grid: one unit is a minor square, every fifth line is heavier.
const grid = document.getElementById('grid');
const UNIT = 40.6;
for (let i = -7; i <= 35; i++) {
  const x = 323.7 + i * UNIT;
  add(grid, 'path', { d: `M${x} 129V1040`, stroke: '#000', 'stroke-opacity': i % 5 ? 0.07 : 0.15 });
}
for (let i = -22; i <= 2; i++) {
  const y = 918.8 + i * UNIT;
  add(grid, 'path', { d: `M0 ${y}H1745`, stroke: '#000', 'stroke-opacity': i % 5 ? 0.07 : 0.15 });
}

// Constraint glyphs, each drawn as a grey outline with a light core.
const glyphs = {
  sym: 'M-4 -7H-10V7H-4M4 -7H10V7H4M0 -10V10',
  tan: 'M-8 0A8 8 0 1 0 8 0A8 8 0 1 0 -8 0M-1 -15L16 1',
  coin: 'M0 -21V-6M0 0H20M-1 -21h2M-1 -5h2M-1 0h2',
  equal: 'M-10 -3H10M-10 3H10',
  horiz: 'M-13 -4H13V0H-13zM-12 5l4 -4M-5 5l4 -4M2 5l4 -4M9 5l4 -4',
  perp: 'M10 -9L-5 5M-10 0L-1 9',
  conc: 'M-10 7H10V2H6V-6Q2 -12 -1 -6V2H-8Q-12 4 -10 7'
};
const placed = {
  sym: [[851,372],[851,431],[851,493],[851,553],[851,614],[851,676],[851,737],[851,797],[851,858],
    [587,613],[645,613],[704,613],[763,613],[821,613],[880,613],[939,613],[998,613],[1056,613],
    [690,288],[690,306],[731,306],[731,325],[797,288],[1011,288],[1011,306],[971,306],[971,325],
    [528,450],[546,450],[546,491],[565,491],[528,694],[546,734],[565,734],[528,775],[546,775],
    [1174,450],[1155,450],[1137,491],[1155,491],[1174,532],[1137,734],[1155,734],[1155,775],[1174,775],
    [690,919],[690,938],[731,901],[731,919],[971,901],[971,919],[1011,919],[1011,938],[904,938]],
  tan: [[668,291],[988,291],[505,453],[1150,453],[505,778],[1150,778],[668,940],[988,941]],
  coin: [[705,371],[539,537],[1111,537],[502,659],[1148,659],[705,947]],
  equal: [[1093,328],[1127,354],[595,926],[1143,889]],
  horiz: [[959,971],[540,753,-90],[1189,510,-90]],
  perp: [[543,617],[555,523,180],[741,327,180],[957,340],[1158,482,180],[1152,525,90],[744,933,90],[703,953,90],[957,925,-90],[1147,738,-90],[560,738]],
  conc: [[839,320],[839,357]]
};
const marks = document.getElementById('marks');
for (const kind in placed) {
  for (const [x, y, r = 0] of placed[kind]) {
    const g = add(marks, 'g', { transform: `translate(${x},${y}) rotate(${r})`, opacity: 0.85 });
    const base = { d: glyphs[kind], fill: 'none', 'stroke-linecap': 'round' };
    const wide = kind === 'tan' || kind === 'coin' ? 1 : 0;
    add(g, 'path', { ...base, stroke: '#73716e', 'stroke-width': 4.6 + wide });
    add(g, 'path', { ...base, stroke: '#e2ded8', 'stroke-width': 1.8 + wide });
  }
}

// Dimension arrowheads: tip position and heading in degrees.
const arrows = document.getElementById('arrows');
[[576,354,45],[1129,352,135],[691,249.7,180],[731.7,249.7,0],[691,892.7,180],[731.7,892.7,0],
 [529,378.7,180],[547,378.7,0],[515.5,469.4,-90],[515.5,510,90],[1099,469.4,-90],[1099,510,90],
 [1156,526.7,180],[1174.7,526.7,0],[791.7,307,-90],[791.7,325,90],[880,343.5,90],[1302.2,307,-90],[1302.2,631.7,90]
].forEach(([x, y, a]) => {
  const len = [529, 547, 1156, 1174.7, 791.7].includes(x) ? 9 : 14;
  add(arrows, 'path', { d: `M0 0L-${len} -3.5V3.5z`, fill: '#111', transform: `translate(${x},${y}) rotate(${a})` });
});

// Sketch points
const points = document.getElementById('points');
[[691,469.4],[1012,469.4],[691,794.4],[1012,794.4],[851.4,329],[851.6,938.4],[1012,307],[971.4,343.6],
 [528.6,794.4],[547,797.7],[565,753.6],[1137.3,753.5],[1174.6,794.4],[971.4,919.8],[1013.7,958.5]
].forEach(([cx, cy]) => add(points, 'circle', { cx, cy, r: 4.8, fill: '#fff', stroke: '#666', 'stroke-width': 1.6 }));

// Timeline features: construction planes, then extrusions.
const features = document.getElementById('features');
for (let i = 0; i < 52; i++) {
  const li = document.createElement('li');
  if (i < 22) li.className = 'hl';
  const svg = add(li, 'svg', { width: 24, height: 28, class: i < 18 ? 'pl' : 'ex' });
  add(svg, 'use', { href: i < 18 ? '#plane' : '#extrude' });
  features.appendChild(li);
}
```
